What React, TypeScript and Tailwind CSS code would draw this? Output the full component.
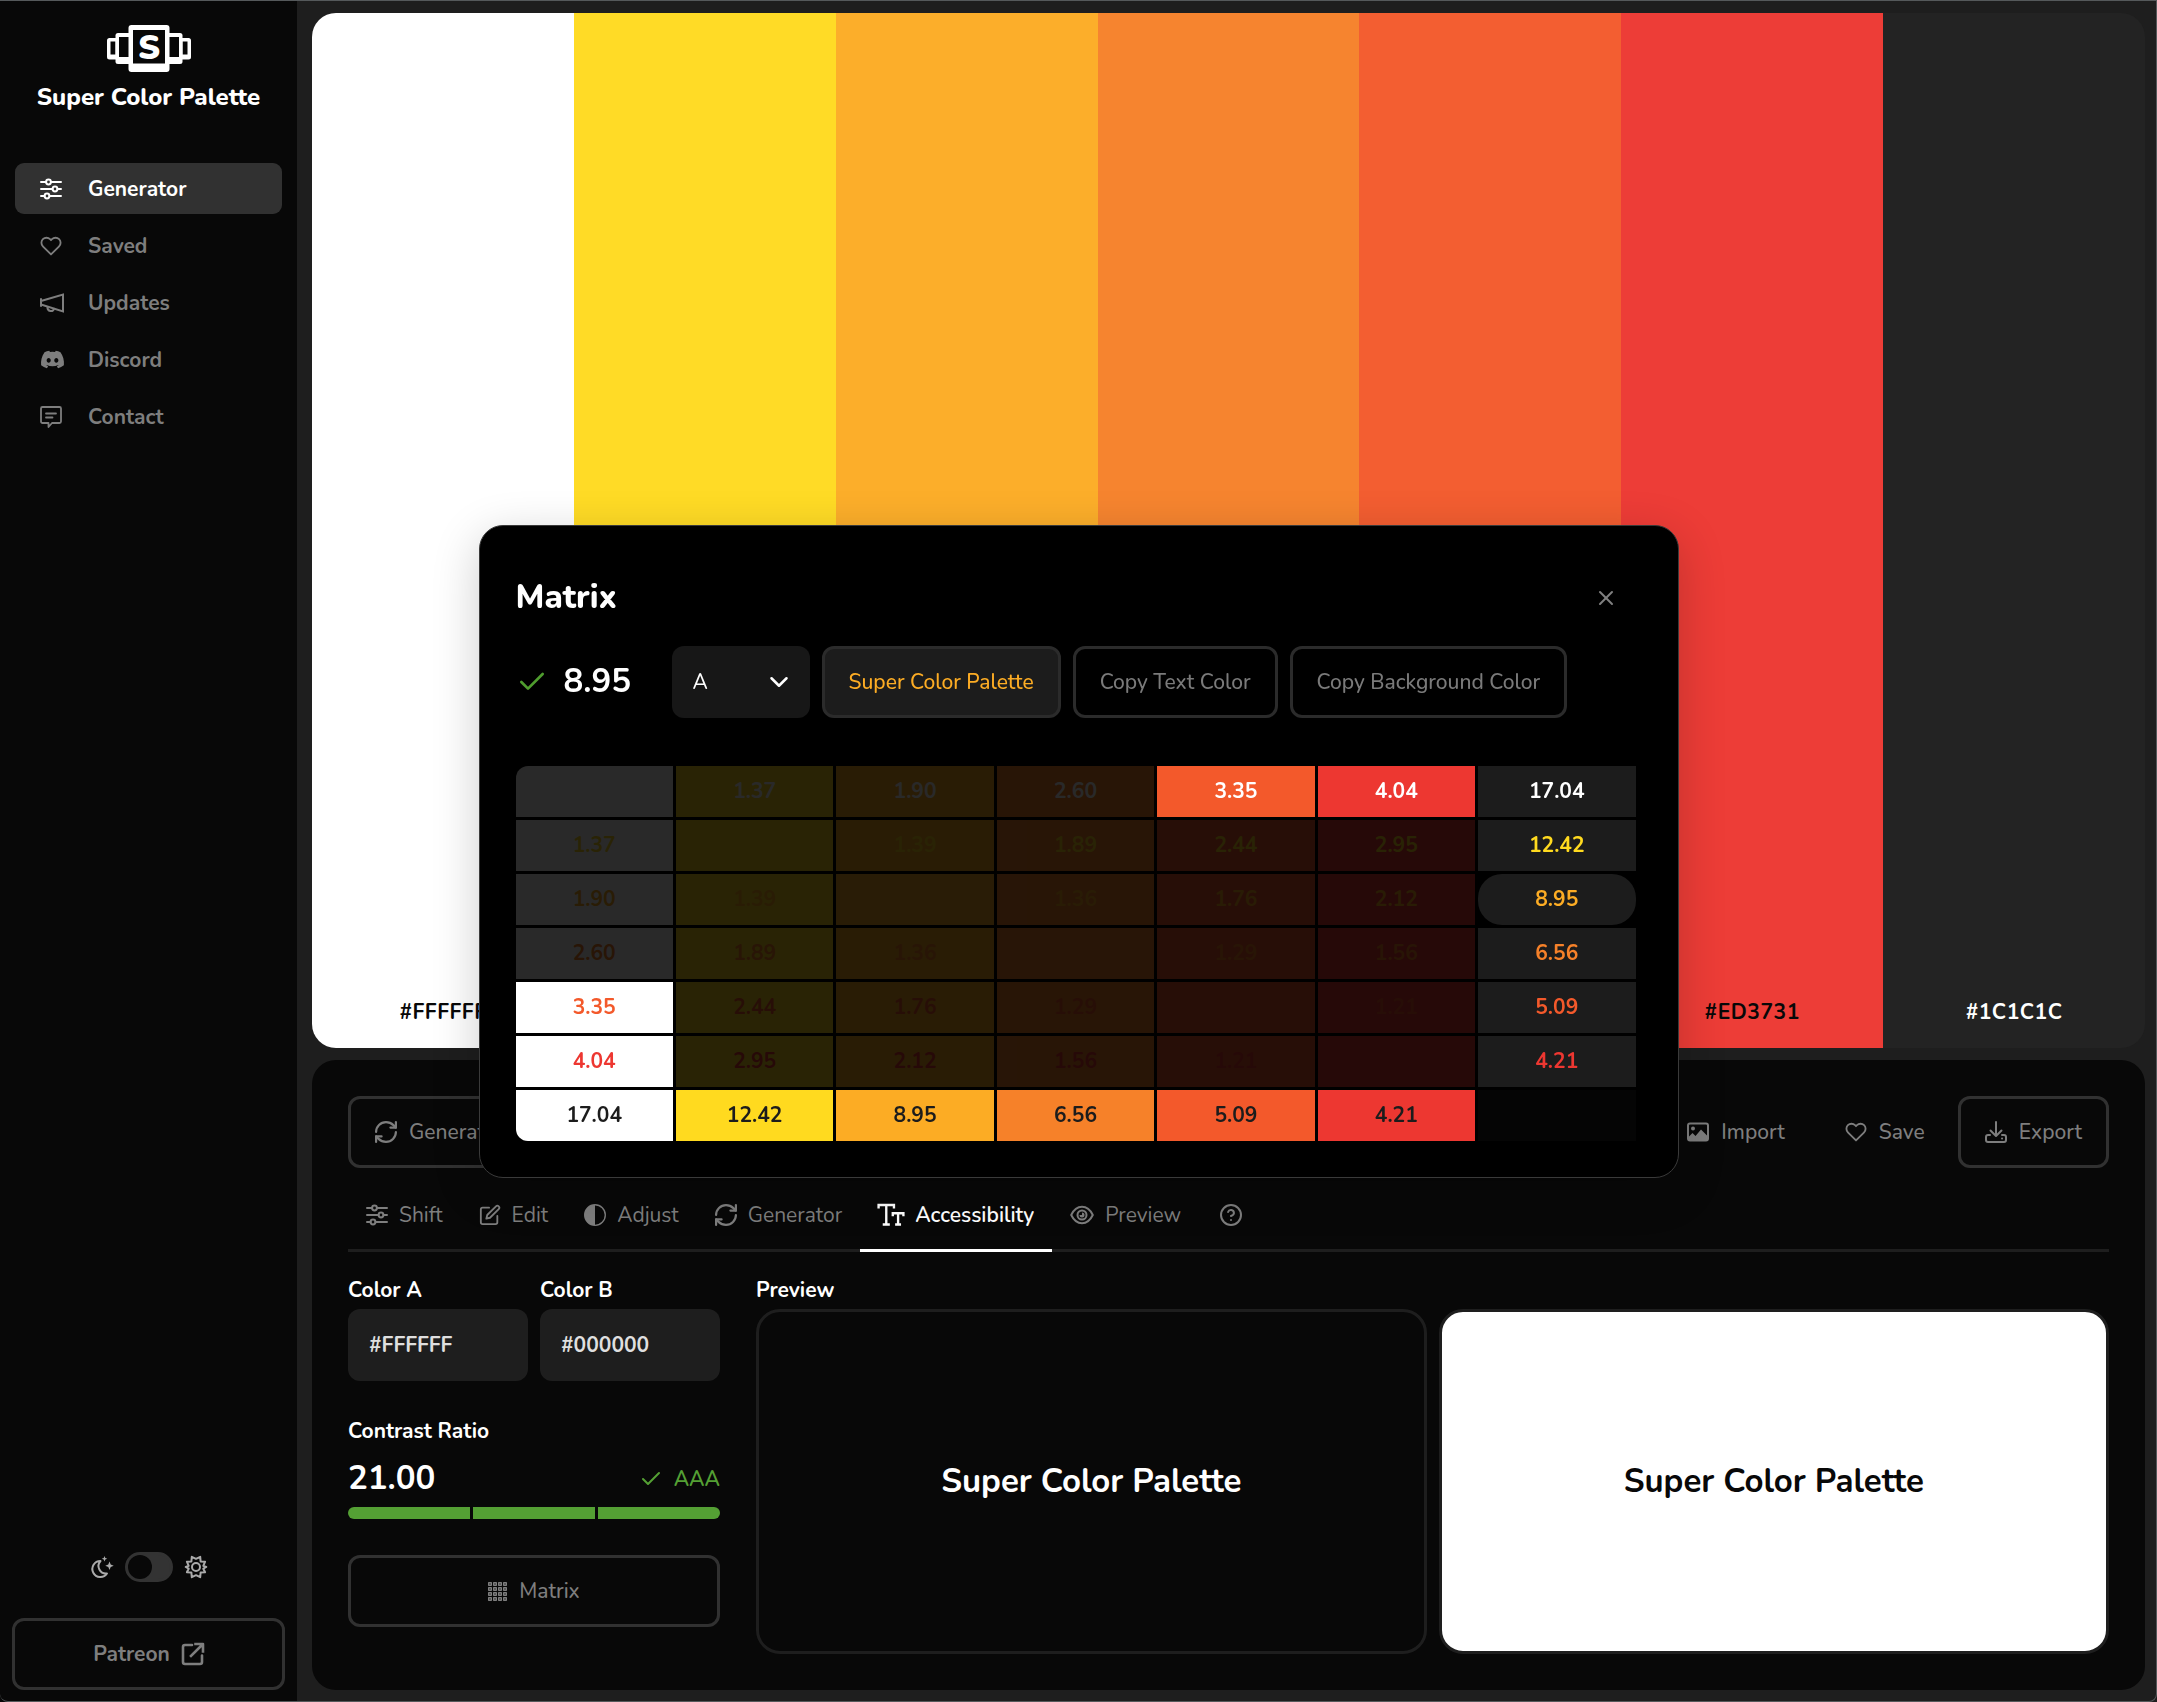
import type { ReactNode } from "react";
import clsx from "clsx";
import {
  FiCheck,
  FiChevronDown,
  FiEdit,
  FiHeart,
  FiHelpCircle,
  FiX,
} from "react-icons/fi";
import { FaDiscord } from "react-icons/fa";
import { BsCircleHalf } from "react-icons/bs";

const palette = [
  "#FFFFFF",
  "#FFDA1F",
  "#FCAC24",
  "#F68129",
  "#F3592B",
  "#ED3731",
  "#1C1C1C",
];

// contrast[row][column], null where a color meets itself
const contrast: (string | null)[][] = [
  [null, "1.37", "1.90", "2.60", "3.35", "4.04", "17.04"],
  ["1.37", null, "1.39", "1.89", "2.44", "2.95", "12.42"],
  ["1.90", "1.39", null, "1.36", "1.76", "2.12", "8.95"],
  ["2.60", "1.89", "1.36", null, "1.29", "1.56", "6.56"],
  ["3.35", "2.44", "1.76", "1.29", null, "1.21", "5.09"],
  ["4.04", "2.95", "2.12", "1.56", "1.21", null, "4.21"],
  ["17.04", "12.42", "8.95", "6.56", "5.09", "4.21", null],
];

const MIN_CONTRAST = 3;

const Icon = ({
  children,
  size = 22,
  strokeWidth = 2,
  viewBox = "1 1 22 22",
}: {
  children: ReactNode;
  size?: number;
  strokeWidth?: number;
  viewBox?: string;
}) => (
  <svg
    width={size}
    height={size}
    viewBox={viewBox}
    fill="none"
    stroke="currentColor"
    strokeWidth={strokeWidth}
    strokeLinecap="round"
    strokeLinejoin="round"
    aria-hidden="true"
    className="shrink-0 overflow-visible"
  >
    {children}
  </svg>
);

const SlidersIcon = () => (
  <Icon>
    <path d="M2 5h5M12 5h10M2 12h11.5M18.5 12H22M2 19h3.5M10.5 19H22" />
    <circle cx="9.5" cy="5" r="2.4" />
    <circle cx="16" cy="12" r="2.4" />
    <circle cx="8" cy="19" r="2.4" />
  </Icon>
);

const MegaphoneIcon = () => (
  <Icon size={24} viewBox="0 0 24 24">
    <path d="M1 8v7M1 10 23 3.5v17L1 13.5" strokeLinejoin="miter" />
    <path d="M7.500 16c-.3 4.600 5.500 5.400 6.500 1.700" />
  </Icon>
);

const MessageIcon = () => (
  <Icon strokeWidth={1.8}>
    <path d="M3.5 2h17A1.5 1.5 0 0 1 22 3.5v13a1.5 1.5 0 0 1-1.5 1.5H13l-3.5 4v-4h-6A1.5 1.5 0 0 1 2 16.5v-13A1.5 1.5 0 0 1 3.5 2Z" />
    <path d="M7 8.500h10M7 12.500h6.500" />
  </Icon>
);

const RefreshIcon = () => (
  <Icon viewBox="2 2 20 20">
    <path d="M3 12a9 9 0 0 1 9-9 9.750 9.750 0 0 1 6.740 2.740L21 8" />
    <path d="M21 3v5h-5M21 12a9 9 0 0 1-9 9 9.750 9.750 0 0 1-6.740-2.740L3 16" />
    <path d="M8 16H3v5" />
  </Icon>
);

const MoonIcon = () => (
  <Icon>
    <path d="M10.500 6A8 8 0 1 0 17 18.500 7.500 7.500 0 0 1 10.500 6Z" />
    <path
      d="m14.500 1 .8 2 2 .8-2 .8-.8 2-.8-2-2-.8 2-.8ZM19.500 6.500l1.200 3 3 1.200-3 1.200-1.200 3-1.200-3-3-1.200 3-1.200Z"
      fill="currentColor"
      stroke="none"
    />
  </Icon>
);

const SunIcon = () => (
  <Icon>
    <path d="m16.200 1.800.4 4.600 4.500.3L19.300 10.900l3 1.100-3 1.700 1.800 3.600-4.500.3-.4 4.600-4.200-2-4.200 2-.4-4.600-4.500-.3 1.800-3.600-3-1.700 3-1.100L2.900 6.700l4.500-.3.4-4.600 4.200 2Z" />
    <circle cx="12" cy="12" r="4" />
  </Icon>
);

const ExternalIcon = () => (
  <Icon strokeWidth={2.6}>
    <path d="M11 3H4a2 2 0 0 0-2 2v15a2 2 0 0 0 2 2h15a2 2 0 0 0 2-2v-6.500" />
    <path d="M10 14 21.500 2.500M14.500 2h7.500v7.500" strokeLinecap="square" />
  </Icon>
);

const TypeIcon = () => (
  <Icon size={26}>
    <path
      d="M1.500 6.500V3.500h13v3M8 3.500v16.500M5 20h6M13.500 13v-2.500h9V13M18 10.500V20M15.500 20h5"
      strokeLinecap="butt"
      strokeLinejoin="miter"
    />
  </Icon>
);

const EyeIcon = () => (
  <Icon size={24} viewBox="0 0 24 24">
    <path d="M1.200 12C4 6.200 7.500 3.800 12 3.800S20 6.200 22.800 12C20 17.800 16.500 20.200 12 20.200S4 17.800 1.200 12Z" />
    <circle cx="12" cy="12" r="4.500" />
    <path
      d="M12 9.500a2.500 2.500 0 1 1-2.500 2.500h2.500Z"
      fill="currentColor"
      stroke="none"
    />
  </Icon>
);

const ImageIcon = () => (
  <Icon>
    <rect x="2" y="3.5" width="20" height="17" rx="2" />
    <circle cx="7" cy="8.500" r="2" fill="currentColor" stroke="none" />
    <path
      d="M2 20.500v-3l4.500-4.500 3 3 5.500-6.500 7 7v4Z"
      fill="currentColor"
      stroke="none"
    />
  </Icon>
);

const DownloadIcon = () => (
  <Icon>
    <path d="M12 2v13.500M6.500 10.500 12 16l5.500-5.500" />
    <path d="M6 15H4a2 2 0 0 0-2 2v3a2 2 0 0 0 2 2h16a2 2 0 0 0 2-2v-3a2 2 0 0 0-2-2h-2M18 18.500h.1" />
  </Icon>
);

const GridIcon = () => (
  <Icon size={19} strokeWidth={1.4} viewBox="0 0 19 19">
    {[0, 5, 10, 15].map((y) =>
      [0, 5, 10, 15].map((x) => (
        <rect
          key={`${x}-${y}`}
          x={x + 0.7}
          y={y + 0.7}
          width="2.6"
          height="2.6"
        />
      )),
    )}
  </Icon>
);

const Logo = () => (
  <svg width="84" height="47" viewBox="0 0 84 47" aria-hidden="true">
    <rect y="13" width="84" height="21.500" rx="2.500" fill="#fff" />
    <path d="M3.500 16.500h5v13h-5zM75.500 16.500h5v13h-5z" fill="#000" />
    <rect x="8.500" y="8" width="67" height="31" rx="2.500" fill="#fff" />
    <path d="M12 12h10v20H12zM62 12h10v20H62z" fill="#000" />
    <rect x="21.500" width="41" height="47" rx="3" fill="#fff" />
    <path d="M26 5h32v33.500H26z" fill="#000" />
    <text
      x="42"
      y="33.500"
      textAnchor="middle"
      fill="#fff"
      className="text-[34px] font-black"
    >
      S
    </text>
  </svg>
);

const navItems = [
  { label: "Generator", icon: <SlidersIcon />, active: true },
  { label: "Saved", icon: <FiHeart size={22} /> },
  { label: "Updates", icon: <MegaphoneIcon /> },
  { label: "Discord", icon: <FaDiscord size={25} /> },
  { label: "Contact", icon: <MessageIcon /> },
];

const Sidebar = () => (
  <aside className="flex w-[297px] shrink-0 flex-col bg-black">
    <a href="#" className="flex flex-col items-center pt-[25px] text-white">
      <Logo />
      <span className="mt-[9px] text-2xl font-extrabold">
        Super Color Palette
      </span>
    </a>

    <nav className="mt-[50px] flex flex-col gap-1.5 px-[15px]">
      {navItems.map((item) => (
        <a
          key={item.label}
          href="#"
          className={clsx(
            "flex h-[51px] items-center rounded-[9px] pl-[25px] font-bold",
            item.active ? "bg-[#2b2b2b] text-white" : "text-[#7a7a7a]",
          )}
        >
          <span className="flex w-12">{item.icon}</span>
          {item.label}
        </a>
      ))}
    </nav>

    <div className="mt-auto px-3 pb-3">
      <div className="flex items-center justify-center gap-3 text-[#a8a8a8]">
        <MoonIcon />
        <input
          type="checkbox"
          role="switch"
          aria-label="Light mode"
          className="h-[30px] w-12 appearance-none rounded-full border-3 border-[#2d2d2d] bg-[#2d2d2d] before:block before:size-6 before:rounded-full before:bg-black checked:before:ml-[18px]"
        />
        <SunIcon />
      </div>
      <a
        href="#"
        className="mt-9 flex h-[72px] items-center justify-center gap-3 rounded-xl border-3 border-[#2b2b2b] font-bold text-[#7a7a7a]"
      >
        Patreon
        <ExternalIcon />
      </a>
    </div>
  </aside>
);

const ActionButton = ({
  icon,
  label,
  outlined,
  className,
}: {
  icon?: ReactNode;
  label: string;
  outlined?: boolean;
  className?: string;
}) => (
  <button
    type="button"
    className={clsx(
      "flex h-[72px] items-center justify-center gap-3 rounded-xl border-3 px-6 font-medium text-[#7a7a7a]",
      outlined ? "border-[#2b2b2b]" : "border-transparent",
      className,
    )}
  >
    {icon}
    {label}
  </button>
);

const tabs = [
  { label: "Shift", icon: <SlidersIcon /> },
  { label: "Edit", icon: <FiEdit size={22} /> },
  { label: "Adjust", icon: <BsCircleHalf size={22} /> },
  { label: "Generator", icon: <RefreshIcon /> },
  { label: "Accessibility", icon: <TypeIcon />, active: true },
  { label: "Preview", icon: <EyeIcon /> },
];

const Tabs = () => (
  <div role="tablist" className="mt-3 flex h-[72px] border-b-3 border-[#171717]">
    {tabs.map((tab) => (
      <button
        key={tab.label}
        type="button"
        role="tab"
        aria-selected={!!tab.active}
        className={clsx(
          "-mb-[3px] flex items-center gap-[11px] border-b-3 px-[18px]",
          tab.active
            ? "border-white font-semibold text-white"
            : "border-transparent text-[#7a7a7a]",
        )}
      >
        {tab.icon}
        {tab.label}
      </button>
    ))}
    <button type="button" aria-label="Help" className="px-5 text-[#7a7a7a]">
      <FiHelpCircle size={24} />
    </button>
  </div>
);

const ColorInput = ({
  id,
  label,
  value,
}: {
  id: string;
  label: string;
  value: string;
}) => (
  <div className="flex min-w-0 flex-1 flex-col">
    <label
      htmlFor={id}
      className="flex h-[39px] items-center font-bold text-white"
    >
      {label}
    </label>
    <input
      id={id}
      defaultValue={value}
      className="h-[72px] w-full rounded-xl bg-[#171717] px-[21px] font-bold text-[#dedede]"
    />
  </div>
);

const AccessibilityPanel = () => (
  <div className="mt-[18px] flex gap-9">
    <div className="w-[372px] shrink-0">
      <div className="flex gap-3">
        <ColorInput id="color-a" label="Color A" value="#FFFFFF" />
        <ColorInput id="color-b" label="Color B" value="#000000" />
      </div>
      <h3 className="mt-[30px] flex h-[39px] items-center font-bold text-white">
        Contrast Ratio
      </h3>
      <div className="flex h-[57px] items-center justify-between">
        <span className="text-[33px] font-bold text-white">21.00</span>
        <span className="flex items-center gap-[11px] font-semibold text-[#4f9d2e]">
          <FiCheck size={24} />
          AAA
        </span>
      </div>
      <div className="flex h-3 gap-[3px] overflow-hidden rounded-full">
        <span className="flex-1 bg-[#4f9d2e]" />
        <span className="flex-1 bg-[#4f9d2e]" />
        <span className="flex-1 bg-[#4f9d2e]" />
      </div>
      <ActionButton
        outlined
        icon={<GridIcon />}
        label="Matrix"
        className="mt-9 w-full"
      />
    </div>

    <div className="flex min-w-0 flex-1 flex-col">
      <h3 className="flex h-[39px] items-center font-bold text-white">
        Preview
      </h3>
      <div className="grid h-[345px] grid-cols-2 gap-3 text-[33px] font-bold">
        <div className="flex items-center justify-center rounded-3xl border-3 border-[#171717] text-white">
          Super Color Palette
        </div>
        <div className="flex items-center justify-center rounded-3xl border-3 border-[#171717] bg-white text-black">
          Super Color Palette
        </div>
      </div>
    </div>
  </div>
);

const MatrixDialog = () => (
  <div
    role="dialog"
    aria-labelledby="matrix-title"
    className="w-[1200px] max-w-full rounded-3xl border border-[#3a3a3a] bg-black p-9 shadow-[0_12px_48px_rgba(0,0,0,0.2)]"
  >
    <header className="flex h-[72px] items-center justify-between">
      <h2 id="matrix-title" className="text-[33px] font-extrabold text-white">
        Matrix
      </h2>
      <button
        type="button"
        aria-label="Close"
        className="flex size-[72px] items-center justify-center text-[#808080]"
      >
        <FiX size={24} />
      </button>
    </header>

    <div className="mt-3 flex items-center gap-3">
      <div className="flex w-36 items-center gap-4 text-[33px] font-bold text-white">
        <FiCheck size={32} className="text-[#4f9d2e]" />
        8.95
      </div>
      <div className="relative">
        <select
          aria-label="Sample text"
          className="h-[72px] w-[138px] appearance-none rounded-xl bg-[#171717] px-[21px] text-white"
        >
          <option>A</option>
        </select>
        <FiChevronDown
          size={30}
          className="pointer-events-none absolute top-[21px] right-4 text-white"
        />
      </div>
      <button
        type="button"
        className="h-[72px] rounded-xl border-3 border-[#2b2b2b] bg-[#1c1c1c] px-6 font-medium text-[#fcac24]"
      >
        Super Color Palette
      </button>
      <ActionButton outlined label="Copy Text Color" />
      <ActionButton outlined label="Copy Background Color" />
    </div>

    <div className="mt-[45px] mr-[3px] -mb-[3px] -ml-[3px]">
      <table className="w-full table-fixed border-separate border-spacing-[3px]">
        <tbody>
          {contrast.map((row, r) => (
            <tr key={palette[r]}>
              {row.map((ratio, c) => (
                <td key={palette[c]} className="p-0">
                  <button
                    type="button"
                    aria-label={`${palette[r]} on ${palette[c]}`}
                    style={{ color: palette[r], backgroundColor: palette[c] }}
                    className={clsx(
                      "block h-[51px] w-full font-bold",
                      Number(ratio) < MIN_CONTRAST && "opacity-16",
                      r === 0 && c === 0 && "rounded-tl-xl",
                      r === 6 && c === 0 && "rounded-bl-xl",
                      r === 2 && c === 6 && "rounded-3xl",
                    )}
                  >
                    {ratio}
                  </button>
                </td>
              ))}
            </tr>
          ))}
        </tbody>
      </table>
    </div>
  </div>
);

export default function App() {
  return (
    <div className="flex min-h-screen bg-[#171717] font-[Nunito,Lato,sans-serif] text-[21px] leading-[30px]">
      <Sidebar />

      <main className="flex min-w-0 flex-1 flex-col gap-3 pt-[13px] pr-3 pb-3 pl-[15px]">
        <section className="flex flex-1 overflow-hidden rounded-3xl">
          {palette.map((color) => (
            <div
              key={color}
              style={{ backgroundColor: color }}
              className={clsx(
                "flex flex-1 items-end justify-center pb-[21px] font-bold tracking-wide",
                color === "#1C1C1C" ? "text-white" : "text-black",
              )}
            >
              {color}
            </div>
          ))}
        </section>

        <section className="rounded-3xl bg-black p-9">
          <div className="flex gap-1.5">
            <ActionButton
              outlined
              icon={<RefreshIcon />}
              label="Generate"
              className="mr-auto"
            />
            <ActionButton icon={<ImageIcon />} label="Import" />
            <ActionButton icon={<FiHeart size={22} />} label="Save" />
            <ActionButton outlined icon={<DownloadIcon />} label="Export" />
          </div>
          <Tabs />
          <AccessibilityPanel />
        </section>
      </main>

      {/* Backdrop lightens everything behind the dialog a little */}
      <div className="fixed inset-0 flex items-center justify-center bg-white/3">
        <MatrixDialog />
      </div>

      {/* Window frame */}
      <div className="pointer-events-none fixed inset-0 rounded-b-lg border-t border-r border-b border-[#55595b]" />
    </div>
  );
}
